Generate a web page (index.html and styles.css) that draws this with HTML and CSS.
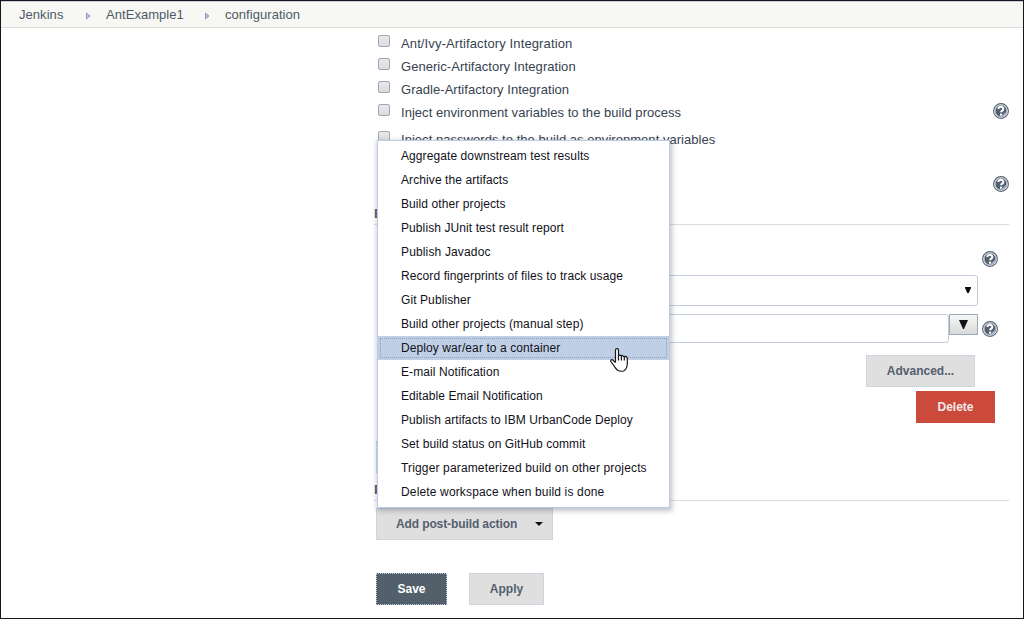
FILE: index.html
```html
<!DOCTYPE html>
<html lang="en">
<head>
<meta charset="utf-8">
<title>AntExample1 configuration</title>
<link rel="stylesheet" href="styles.css">
</head>
<body>
<svg class="defs" aria-hidden="true">
  <symbol id="help" viewBox="0 0 16 16">
    <circle cx="8" cy="8" r="7.4" fill="#fff" stroke="#53606c" stroke-width="1.1"/>
    <circle cx="8" cy="8" r="5.9" fill="#53616e" stroke="#a9b6c8" stroke-width="1"/>
    <path d="M8.2 13.4 13.3 8.6 12.5 12 10 13.7z" fill="#a9b6c8"/>
    <path d="M5.4 6C5.4 2.9 10.5 3.2 10.3 6.1 10.2 7.8 8.2 7.5 8.1 9.3" fill="none" stroke="#fff" stroke-width="2"/>
    <rect x="7" y="10.6" width="2.1" height="2.1" fill="#fff"/>
  </symbol>
</svg>
<div class="page">
  <nav class="crumbs">
    <a class="crumb-a">Jenkins</a>
    <svg class="sep" viewBox="0 0 5 8"><path d="M.5 1v6L4 4z" fill="#b3bfd6" stroke="#93a3bf"/></svg>
    <a class="crumb-b">AntExample1</a>
    <svg class="sep" viewBox="0 0 5 8"><path d="M.5 1v6L4 4z" fill="#b3bfd6" stroke="#93a3bf"/></svg>
    <a class="crumb-c">configuration</a>
  </nav>
  <main class="config">
    <div class="option wide"><i class="check"></i><span>Ant/Ivy-Artifactory Integration</span></div>
    <div class="option"><i class="check"></i><span>Generic-Artifactory Integration</span></div>
    <div class="option"><i class="check"></i><span>Gradle-Artifactory Integration</span></div>
    <div class="option"><i class="check"></i><span>Inject environment variables to the build process</span><svg class="help"><use href="#help"/></svg></div>
    <div class="option last"><i class="check"></i><span>Inject passwords to the build as environment variables</span></div>
    <div class="help-row"><svg class="help"><use href="#help"/></svg></div>
    <h2 class="section">Build</h2>
    <div class="step">
      <div class="step-head"><svg class="help"><use href="#help"/></svg></div>
      <div class="select"><svg class="arrow" viewBox="0 0 6 6"><path d="M0 0h6v1L3.8 6H2.2L0 1z"/></svg></div>
      <div class="targets">
        <div class="input"></div>
        <div class="expand"><svg class="arrow-big" viewBox="0 0 9 9"><path d="M0 0h9L5 9H4z"/></svg></div>
        <svg class="help"><use href="#help"/></svg>
      </div>
      <div class="advanced-row"><button class="btn advanced">Advanced...</button></div>
      <div class="delete-row"><button class="btn delete">Delete</button></div>
    </div>
    <button class="btn add-step" aria-label="Add build step"></button>
    <h2 class="section post">Post-build Actions</h2>
    <div class="menu-anchor">
      <button class="btn add-post"><span>Add post-build action</span><svg class="caret" viewBox="0 0 8 4"><path d="M0 0h8L4 4z"/></svg></button>
      <ul class="menu">
        <li>Aggregate downstream test results</li>
        <li>Archive the artifacts</li>
        <li>Build other projects</li>
        <li>Publish JUnit test result report</li>
        <li class="loose">Publish Javadoc</li>
        <li>Record fingerprints of files to track usage</li>
        <li>Git Publisher</li>
        <li>Build other projects (manual step)</li>
        <li class="selected">Deploy war/ear to a container</li>
        <li>E-mail Notification</li>
        <li>Editable Email Notification</li>
        <li>Publish artifacts to IBM UrbanCode Deploy</li>
        <li>Set build status on GitHub commit</li>
        <li class="loose">Trigger parameterized build on other projects</li>
        <li class="loose">Delete workspace when build is done</li>
      </ul>
      <svg class="cursor" viewBox="0 0 18 24"><path d="M5.5 14.5V2.2Q5.5 .7 7 .7T8.5 2.2V8Q9.3 6.6 11 7.5 12.700 6.800 13.600 8.500 16.800 7.800 17.300 10.300V16Q17 21 14 22.700 11 24 7.500 22.300 5 20 3.500 17L.8 13.500Q.3 11.300 2.700 11.800L5.500 14.500" fill="#fff" stroke="#15151f" stroke-width="1.200"/><path d="M8.500 7.500v5M11.400 7.500v5M14.300 8.500v4" fill="none" stroke="#15151f" stroke-width="1.200"/></svg>
    </div>
    <div class="actions"><button class="btn save">Save</button><button class="btn apply">Apply</button></div>
  </main>
</div>
</body>
</html>
```
FILE: styles.css
```css
* { box-sizing: border-box; }
body { margin: 0; font-family: "Liberation Sans", Arial, sans-serif; color: #36424f; background: #fff; }
.defs { position: absolute; width: 0; height: 0; }
.page { width: 1024px; height: 619px; border: 1px solid #17151f; overflow: hidden; }
.crumbs { display: flex; align-items: center; height: 27px; padding-left: 18px; background: #f7f7f3; border-top: 1px solid #cfcbdc; border-bottom: 1px solid #dededa; font-size: 13px; color: #4d5a68; letter-spacing: .05px; }
.sep { width: 5px; height: 8px; margin-top: 2px; }
.crumb-a { width: 67px; }
.crumb-b { width: 99px; margin-left: 15px; }
.crumb-c { margin-left: 15px; }
.config { display: flex; flex-direction: column; width: 633px; margin-left: 375px; padding-top: 4px; }
.option { display: flex; align-items: center; flex: none; height: 23px; padding-left: 2px; font-size: 13px; letter-spacing: .04px; white-space: nowrap; }
.option.wide { letter-spacing: .12px; }
.option.last { margin-top: 4px; }
.option .help { margin-left: auto; margin-top: -3px; }
.check { width: 12px; height: 12px; margin: -5px 11px 0 0; border: 1px solid #9ba7b8; border-radius: 2px; background: linear-gradient(#e9e9e9, #dcdcdc); }
.help { display: block; flex: none; width: 16px; height: 16px; }
.help-row { display: flex; justify-content: flex-end; height: 54px; padding-top: 25px; }
.section { height: 20px; margin: 0 0 0 -2px; border-bottom: 1px solid #dcdcdc; font-size: 13px; line-height: 17px; color: #4d5a68; }
.step { height: 216px; }
.step-head { display: flex; justify-content: flex-end; height: 50px; padding: 26px 11px 0 0; }
.select { display: flex; align-items: center; justify-content: flex-end; width: 502px; height: 31px; margin-left: 100px; padding-right: 6px; border: 1px solid #c3cddc; border-radius: 3px; }
.arrow { width: 6px; height: 6px; margin-top: -1px; fill: #101018; }
.targets { display: flex; align-items: flex-start; height: 29px; margin: 8px 0 0 100px; }
.input { width: 473px; height: 29px; border: 1px solid #c3cddc; border-radius: 3px; }
.expand { display: flex; align-items: center; justify-content: center; width: 29px; height: 21px; border: 1px solid #9ba9be; background: linear-gradient(#f7f7f5, #d9d9d9); }
.arrow-big { width: 9px; height: 9px; margin-top: -1px; fill: #101018; }
.targets .help { margin: 7px 0 0 4px; }
.advanced-row, .delete-row { display: flex; justify-content: flex-end; }
.advanced-row { margin-top: 12px; padding-right: 34px; }
.delete-row { margin-top: 4px; padding-right: 14px; }
.btn { display: flex; align-items: center; justify-content: center; flex: none; height: 32px; margin: 0; padding: 0; border: 1px dotted #bccbe0; background: #dfdfdf; color: #53606d; font: bold 12px "Liberation Sans", Arial, sans-serif; white-space: nowrap; }
.advanced { width: 109px; }
.delete { width: 79px; background: #cb4a3c; border-color: #cb4a3c; color: #f3e8e8; }
.add-step { width: 130px; }
.section.post { height: 28px; line-height: 33px; }
.menu-anchor { position: relative; height: 39px; padding-top: 7px; }
.add-post { width: 177px; padding-left: 10px; gap: 18px; letter-spacing: -.1px; }
.caret { width: 8px; height: 4px; fill: #101018; }
.menu { position: absolute; left: 1px; bottom: 32px; width: 293px; height: 368px; margin: 0; padding: 3px 0 0; list-style: none; background: #fff; border: 1px solid #bdcce2; box-shadow: 1px 2px 5px 1px rgba(90, 100, 115, .38); font-size: 12px; color: #11111a; }
.menu li { height: 24px; padding-left: 23px; line-height: 24px; white-space: nowrap; letter-spacing: .09px; }
.menu li.loose { letter-spacing: .15px; }
.menu .selected { background: #bfcfe5; outline: 1px dotted #8e9db4; outline-offset: -3px; }
.cursor { position: absolute; left: 234px; top: -153px; width: 18px; height: 24px; }
.actions { display: flex; gap: 22px; padding-top: 33px; }
.save { width: 71px; background: #53606b; color: #fff; }
.apply { width: 75px; }
```
